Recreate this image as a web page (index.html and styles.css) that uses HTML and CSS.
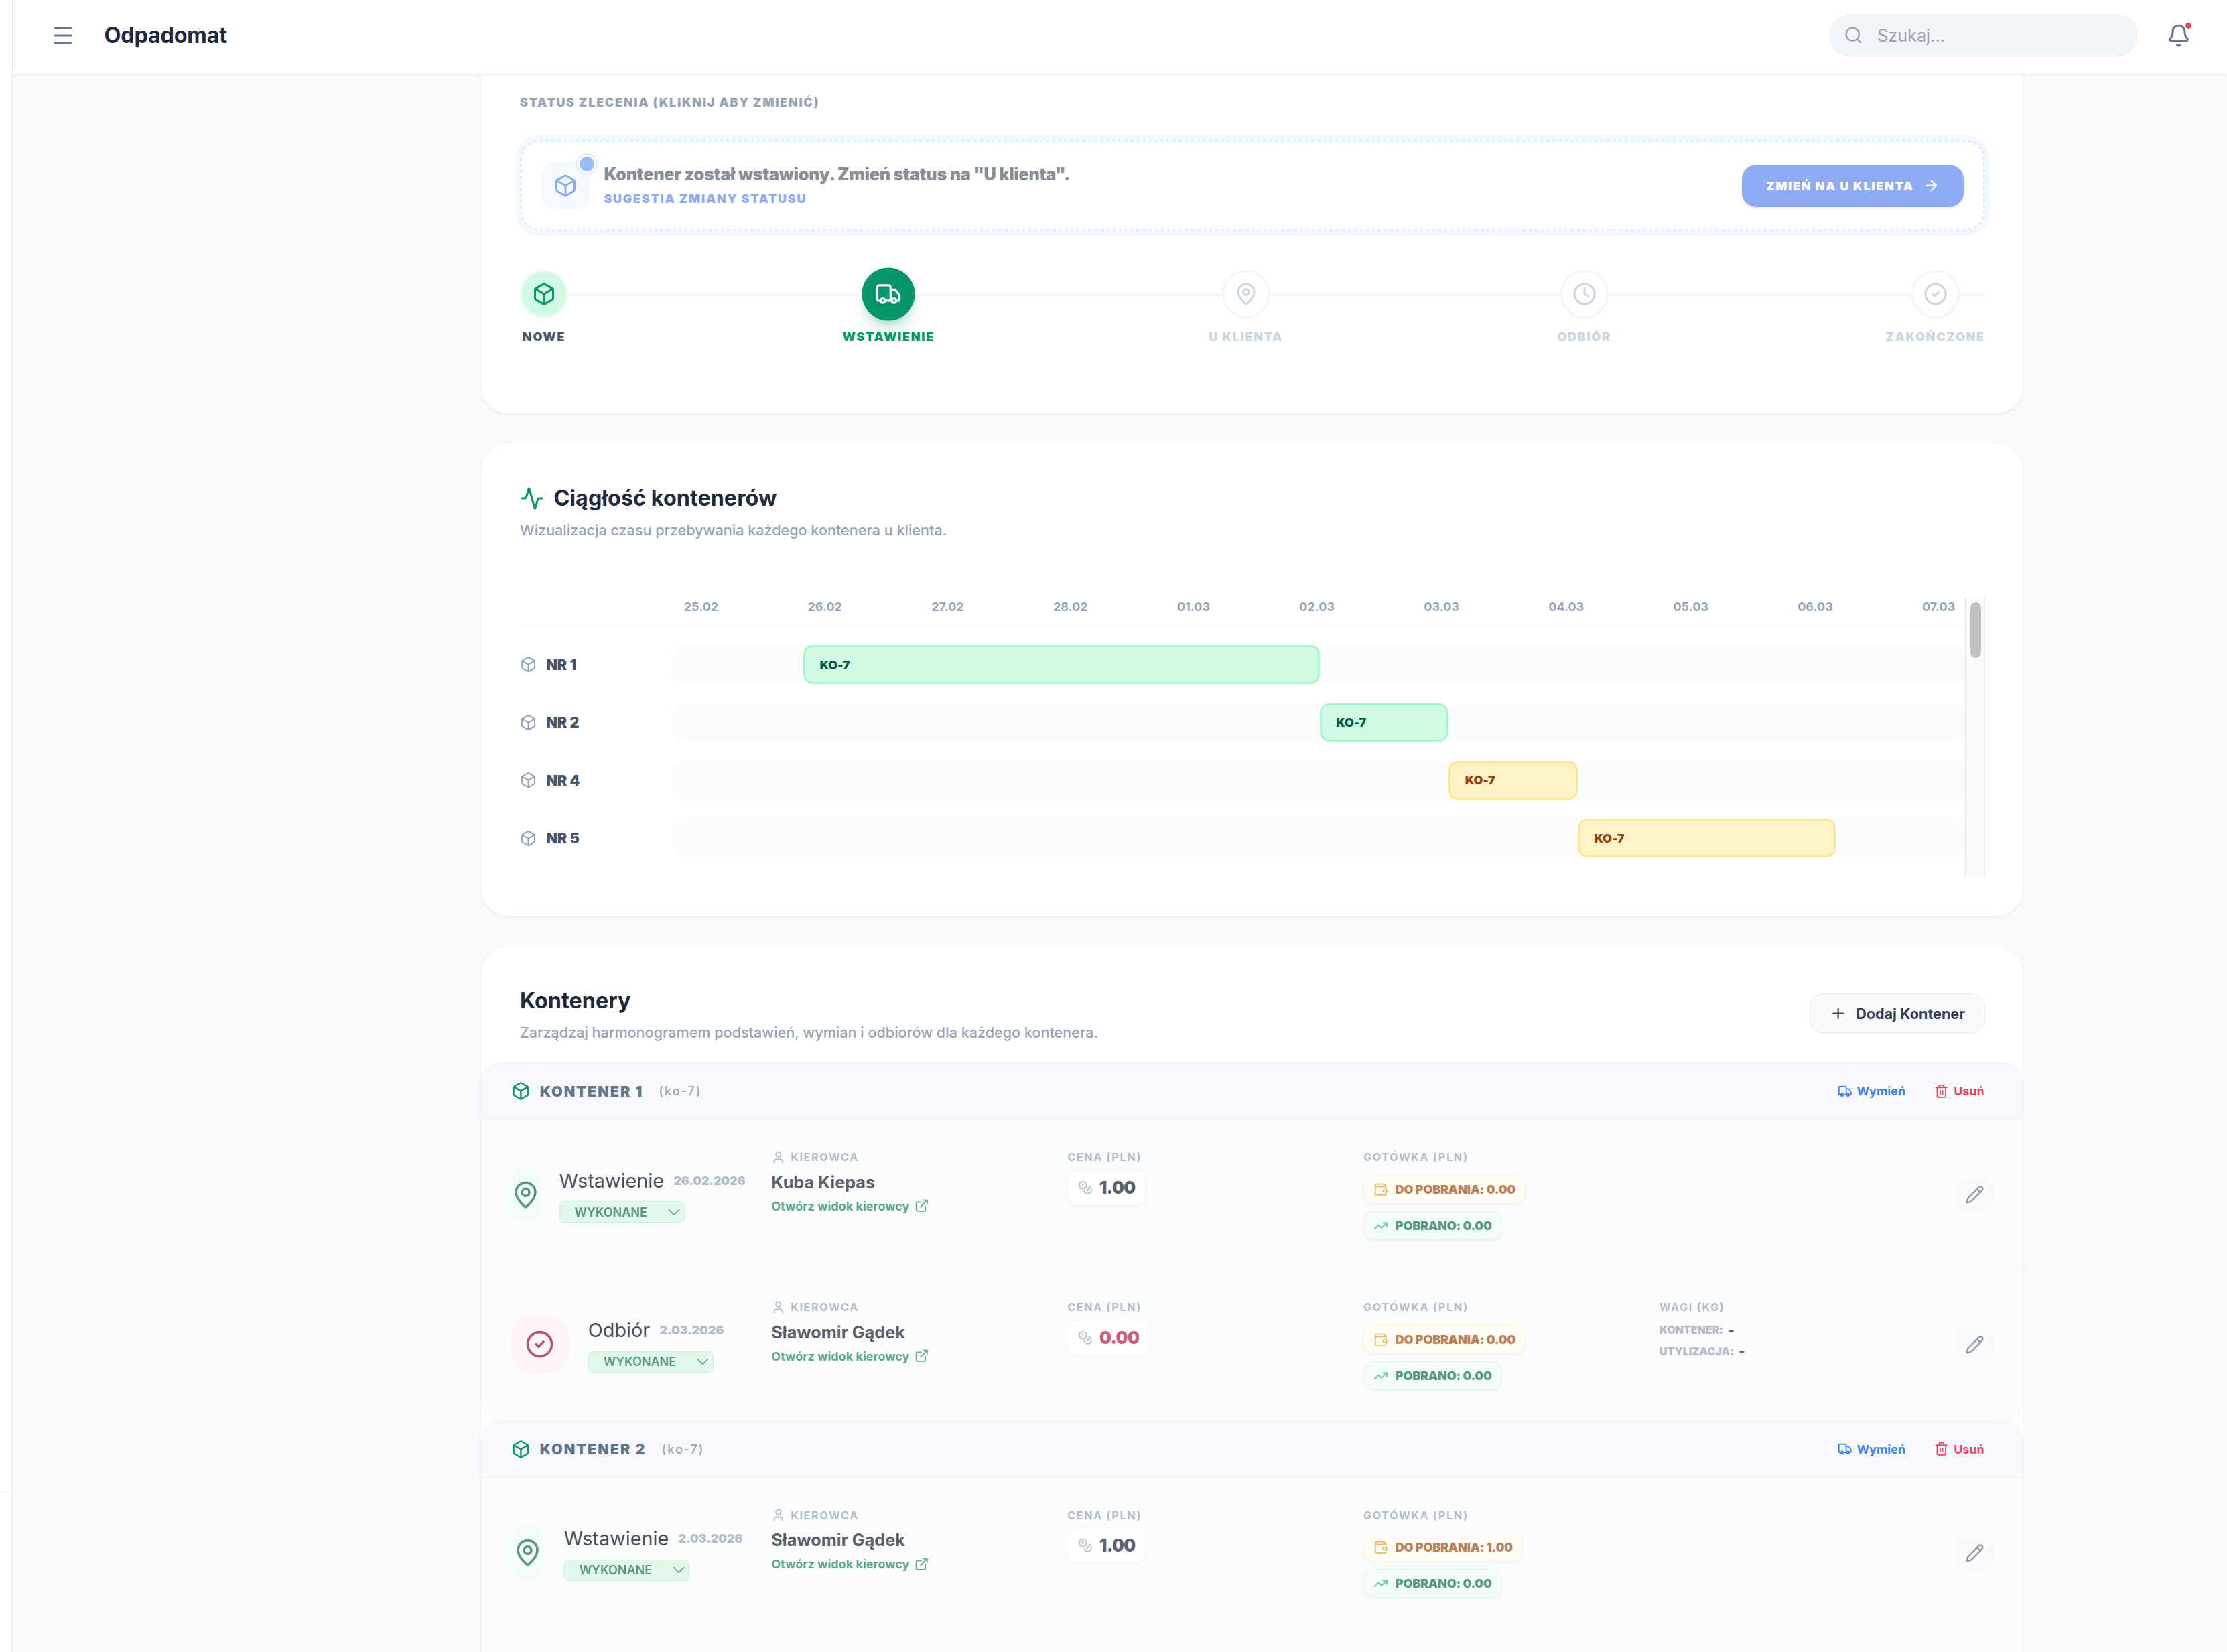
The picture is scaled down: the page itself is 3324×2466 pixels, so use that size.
FILE: index.html
```html
<!DOCTYPE html>
<html lang="pl">
<head>
  <meta charset="UTF-8" />
  <meta name="viewport" content="width=device-width, initial-scale=1.0"/>
  <title>Odpadomat</title>
  <link rel="stylesheet" href="styles.css">
</head>
<body>

  <!-- icons -->
  <svg class="sprite" xmlns="http://www.w3.org/2000/svg">
    <symbol id="menu" viewBox="0 0 24 24"><path d="M4 5h16M4 12h16M4 19h16"/></symbol>
    <symbol id="search" viewBox="0 0 24 24"><circle cx="11" cy="11" r="8"/><path d="m21 21-4.3-4.3"/></symbol>
    <symbol id="bell" viewBox="0 0 24 24"><path d="M10.268 21a2 2 0 0 0 3.464 0"/><path d="M3.262 15.326A1 1 0 0 0 4 17h16a1 1 0 0 0 .74-1.673C19.41 13.956 18 12.499 18 8A6 6 0 0 0 6 8c0 4.499-1.411 5.956-2.738 7.326"/></symbol>
    <symbol id="box" viewBox="0 0 24 24"><path d="M21 8a2 2 0 0 0-1-1.73l-7-4a2 2 0 0 0-2 0l-7 4A2 2 0 0 0 3 8v8a2 2 0 0 0 1 1.73l7 4a2 2 0 0 0 2 0l7-4A2 2 0 0 0 21 16Z"/><path d="m3.3 7 8.7 5 8.7-5"/><path d="M12 22V12"/></symbol>
    <symbol id="truck" viewBox="0 0 24 24"><path d="M14 18V6a2 2 0 0 0-2-2H4a2 2 0 0 0-2 2v11a1 1 0 0 0 1 1h2"/><path d="M15 18H9"/><path d="M19 18h2a1 1 0 0 0 1-1v-3.65a1 1 0 0 0-.22-.624l-3.48-4.35A1 1 0 0 0 17.52 8H14"/><circle cx="17" cy="18" r="2"/><circle cx="7" cy="18" r="2"/></symbol>
    <symbol id="pin" viewBox="0 0 24 24"><path d="M20 10c0 4.993-5.539 10.193-7.399 11.799a1 1 0 0 1-1.202 0C9.539 20.193 4 14.993 4 10a8 8 0 0 1 16 0"/><circle cx="12" cy="10" r="3"/></symbol>
    <symbol id="clock" viewBox="0 0 24 24"><circle cx="12" cy="12" r="10"/><path d="M12 6v6l4 2"/></symbol>
    <symbol id="check" viewBox="0 0 24 24"><circle cx="12" cy="12" r="10"/><path d="m9 12 2 2 4-4"/></symbol>
    <symbol id="arrow" viewBox="0 0 24 24"><path d="M5 12h14"/><path d="m12 5 7 7-7 7"/></symbol>
    <symbol id="activity" viewBox="0 0 24 24"><path d="M22 12h-2.48a2 2 0 0 0-1.93 1.46l-2.35 8.36a.25.25 0 0 1-.48 0L9.24 2.18a.25.25 0 0 0-.48 0l-2.35 8.36A2 2 0 0 1 4.49 12H2"/></symbol>
    <symbol id="plus" viewBox="0 0 24 24"><path d="M5 12h14M12 5v14"/></symbol>
    <symbol id="trash" viewBox="0 0 24 24"><path d="M3 6h18"/><path d="M19 6v14a2 2 0 0 1-2 2H7a2 2 0 0 1-2-2V6"/><path d="M8 6V4a2 2 0 0 1 2-2h4a2 2 0 0 1 2 2v2"/><path d="M10 11v6M14 11v6"/></symbol>
    <symbol id="user" viewBox="0 0 24 24"><path d="M19 21v-2a4 4 0 0 0-4-4H9a4 4 0 0 0-4 4v2"/><circle cx="12" cy="7" r="4"/></symbol>
    <symbol id="external" viewBox="0 0 24 24"><path d="M15 3h6v6"/><path d="M10 14 21 3"/><path d="M18 13v6a2 2 0 0 1-2 2H5a2 2 0 0 1-2-2V8a2 2 0 0 1 2-2h6"/></symbol>
    <symbol id="coins" viewBox="0 0 24 24"><circle cx="8" cy="8" r="6"/><path d="M18.09 10.37A6 6 0 1 1 10.34 18"/><path d="M7 6h1v4"/><path d="m16.71 13.88.7.71-2.82 2.82"/></symbol>
    <symbol id="wallet" viewBox="0 0 24 24"><path d="M19 7V4a1 1 0 0 0-1-1H5a2 2 0 0 0 0 4h15a1 1 0 0 1 1 1v4h-3a2 2 0 0 0 0 4h3a1 1 0 0 0 1-1v-2a1 1 0 0 0-1-1"/><path d="M3 5v14a2 2 0 0 0 2 2h15a1 1 0 0 0 1-1v-4"/></symbol>
    <symbol id="trend" viewBox="0 0 24 24"><path d="M16 7h6v6"/><path d="m22 7-8.5 8.5-5-5L2 17"/></symbol>
    <symbol id="pen" viewBox="0 0 24 24"><path d="M21.174 6.812a1 1 0 0 0-3.986-3.987L3.842 16.174a2 2 0 0 0-.5.83l-1.321 4.352a.5.5 0 0 0 .623.622l4.353-1.32a2 2 0 0 0 .83-.497z"/><path d="m15 5 4 4"/></symbol>
    <symbol id="chevron" viewBox="0 0 24 14"><path d="m2 2 10 10L22 2"/></symbol>
  </svg>

  <div class="sidebar"><div class="sidebar-footer"></div></div>

  <div class="page">
    <header class="topbar">
      <button class="icon-btn"><svg class="icon i20"><use href="#menu"/></svg></button>
      <h1 class="brand">Odpadomat</h1>
      <div class="search"><svg class="icon i16"><use href="#search"/></svg><span>Szukaj...</span></div>
      <button class="icon-btn bell"><svg class="icon i20"><use href="#bell"/></svg><span class="bell-dot"></span></button>
    </header>

    <main class="content">

      <section class="card status-card">
        <div class="status-title">Status zlecenia (kliknij aby zmienić)</div>

        <div class="suggestion">
          <div class="suggestion-icon"><svg class="icon i20"><use href="#box"/></svg><span class="ping"></span></div>
          <div class="suggestion-text">
            <div class="suggestion-main">Kontener został wstawiony. Zmień status na "U klienta".</div>
            <div class="suggestion-sub">Sugestia zmiany statusu</div>
          </div>
          <button class="change-btn"><span>Zmień na U klienta</span><svg class="icon i14"><use href="#arrow"/></svg></button>
        </div>

        <div class="stepper">
          <div class="step done"><div class="step-circle"><svg class="icon i20"><use href="#box"/></svg></div><span>Nowe</span></div>
          <div class="step active"><div class="step-circle"><svg class="icon i20"><use href="#truck"/></svg></div><span>Wstawienie</span></div>
          <div class="step"><div class="step-circle"><svg class="icon i20"><use href="#pin"/></svg></div><span>U klienta</span></div>
          <div class="step"><div class="step-circle"><svg class="icon i20"><use href="#clock"/></svg></div><span>Odbiór</span></div>
          <div class="step"><div class="step-circle"><svg class="icon i20"><use href="#check"/></svg></div><span>Zakończone</span></div>
        </div>
      </section>

      <section class="card timeline-card">
        <h2 class="card-title"><svg class="icon i20"><use href="#activity"/></svg>Ciągłość kontenerów</h2>
        <p class="card-sub">Wizualizacja czasu przebywania każdego kontenera u klienta.</p>

        <div class="gantt">
          <div class="gantt-body">
            <div class="gantt-head">
              <span>25.02</span><span>26.02</span><span>27.02</span><span>28.02</span><span>01.03</span><span>02.03</span><span>03.03</span><span>04.03</span><span>05.03</span><span>06.03</span><span>07.03</span>
            </div>
            <div class="gantt-row">
              <div class="gantt-label"><svg class="icon i14"><use href="#box"/></svg>NR 1</div>
              <div class="track"><div class="bar green" style="margin-left:10%;width:40%">KO-7</div></div>
            </div>
            <div class="gantt-row">
              <div class="gantt-label"><svg class="icon i14"><use href="#box"/></svg>NR 2</div>
              <div class="track"><div class="bar green" style="margin-left:50%;width:10%">KO-7</div></div>
            </div>
            <div class="gantt-row">
              <div class="gantt-label"><svg class="icon i14"><use href="#box"/></svg>NR 4</div>
              <div class="track"><div class="bar amber" style="margin-left:60%;width:10%">KO-7</div></div>
            </div>
            <div class="gantt-row">
              <div class="gantt-label"><svg class="icon i14"><use href="#box"/></svg>NR 5</div>
              <div class="track"><div class="bar amber" style="margin-left:70%;width:20%">KO-7</div></div>
            </div>
          </div>
          <div class="scrollbar"><div class="thumb"></div></div>
        </div>
      </section>

      <section class="card list-card">
        <div class="list-head">
          <div>
            <h2 class="card-title">Kontenery</h2>
            <p class="card-sub">Zarządzaj harmonogramem podstawień, wymian i odbiorów dla każdego kontenera.</p>
          </div>
          <button class="add-btn"><svg class="icon i14"><use href="#plus"/></svg>Dodaj Kontener</button>
        </div>

        <div class="group">
          <div class="group-head">
            <svg class="icon i16 group-icon"><use href="#box"/></svg>
            <span class="group-name">Kontener 1</span>
            <span class="group-type">(ko-7)</span>
            <button class="link-btn blue"><svg class="icon i12"><use href="#truck"/></svg>Wymień</button>
            <button class="link-btn red"><svg class="icon i12"><use href="#trash"/></svg>Usuń</button>
          </div>

          <div class="row first">
            <div class="stage">
              <div class="stage-icon"><svg class="icon i24"><use href="#pin"/></svg></div>
              <div class="stage-info">
                <div class="stage-name">Wstawienie<span class="date">26.02.2026</span></div>
                <div class="select">WYKONANE<svg class="icon"><use href="#chevron"/></svg></div>
              </div>
            </div>
            <div class="cell">
              <div class="label"><svg class="icon i12"><use href="#user"/></svg>Kierowca</div>
              <div class="driver">Kuba Kiepas</div>
              <a class="driver-link">Otwórz widok kierowcy<svg class="icon i12"><use href="#external"/></svg></a>
            </div>
            <div class="cell">
              <div class="label">Cena (PLN)</div>
              <div class="price"><svg class="icon i12"><use href="#coins"/></svg>1.00</div>
            </div>
            <div class="cell">
              <div class="label">Gotówka (PLN)</div>
              <div class="chip due"><svg class="icon i12"><use href="#wallet"/></svg>DO POBRANIA: 0.00</div>
              <div class="chip paid"><svg class="icon i12"><use href="#trend"/></svg>POBRANO: 0.00</div>
            </div>
            <div class="cell"></div>
            <button class="edit-btn"><svg class="icon i16"><use href="#pen"/></svg></button>
          </div>

          <div class="row last">
            <div class="stage">
              <div class="stage-icon rose"><svg class="icon i24"><use href="#check"/></svg></div>
              <div class="stage-info">
                <div class="stage-name">Odbiór<span class="date">2.03.2026</span></div>
                <div class="select">WYKONANE<svg class="icon"><use href="#chevron"/></svg></div>
              </div>
            </div>
            <div class="cell">
              <div class="label"><svg class="icon i12"><use href="#user"/></svg>Kierowca</div>
              <div class="driver">Sławomir Gądek</div>
              <a class="driver-link">Otwórz widok kierowcy<svg class="icon i12"><use href="#external"/></svg></a>
            </div>
            <div class="cell">
              <div class="label">Cena (PLN)</div>
              <div class="price zero"><svg class="icon i12"><use href="#coins"/></svg>0.00</div>
            </div>
            <div class="cell">
              <div class="label">Gotówka (PLN)</div>
              <div class="chip due"><svg class="icon i12"><use href="#wallet"/></svg>DO POBRANIA: 0.00</div>
              <div class="chip paid"><svg class="icon i12"><use href="#trend"/></svg>POBRANO: 0.00</div>
            </div>
            <div class="cell">
              <div class="label">Wagi (kg)</div>
              <div class="weight"><span>Kontener:</span><b>-</b></div>
              <div class="weight"><span>Utylizacja:</span><b>-</b></div>
            </div>
            <button class="edit-btn"><svg class="icon i16"><use href="#pen"/></svg></button>
          </div>
        </div>

        <div class="group">
          <div class="group-head">
            <svg class="icon i16 group-icon"><use href="#box"/></svg>
            <span class="group-name">Kontener 2</span>
            <span class="group-type">(ko-7)</span>
            <button class="link-btn blue"><svg class="icon i12"><use href="#truck"/></svg>Wymień</button>
            <button class="link-btn red"><svg class="icon i12"><use href="#trash"/></svg>Usuń</button>
          </div>

          <div class="row">
            <div class="stage">
              <div class="stage-icon"><svg class="icon i24"><use href="#pin"/></svg></div>
              <div class="stage-info">
                <div class="stage-name">Wstawienie<span class="date">2.03.2026</span></div>
                <div class="select">WYKONANE<svg class="icon"><use href="#chevron"/></svg></div>
              </div>
            </div>
            <div class="cell">
              <div class="label"><svg class="icon i12"><use href="#user"/></svg>Kierowca</div>
              <div class="driver">Sławomir Gądek</div>
              <a class="driver-link">Otwórz widok kierowcy<svg class="icon i12"><use href="#external"/></svg></a>
            </div>
            <div class="cell">
              <div class="label">Cena (PLN)</div>
              <div class="price"><svg class="icon i12"><use href="#coins"/></svg>1.00</div>
            </div>
            <div class="cell">
              <div class="label">Gotówka (PLN)</div>
              <div class="chip due"><svg class="icon i12"><use href="#wallet"/></svg>DO POBRANIA: 1.00</div>
              <div class="chip paid"><svg class="icon i12"><use href="#trend"/></svg>POBRANO: 0.00</div>
            </div>
            <div class="cell"></div>
            <button class="edit-btn"><svg class="icon i16"><use href="#pen"/></svg></button>
          </div>

          <div class="row next"></div>
        </div>
      </section>

    </main>
  </div>

  <div class="bottom-shade"></div>

</body>
</html>
```

FILE: styles.css
```css
* {
  box-sizing: border-box;
  margin: 0;
  padding: 0;
}
html {
  font-size: 28.8px;
}
body {
  display: flex;
  height: 100vh;
  overflow: hidden;
  position: relative;
  background-color: #f8fafc;
  color: #1e293b;
  font-family: Inter, "Liberation Sans", sans-serif;
}
button {
  border: none;
  background: none;
  font-family: inherit;
  color: inherit;
  display: flex;
  align-items: center;
}
.sprite {
  position: absolute;
  width: 0;
  height: 0;
}
.icon {
  fill: none;
  stroke: currentColor;
  stroke-width: 2;
  stroke-linecap: round;
  stroke-linejoin: round;
  flex-shrink: 0;
  display: block;
}
.i12 { width: 0.75rem; height: 0.75rem; }
.i14 { width: 0.875rem; height: 0.875rem; }
.i16 { width: 1rem; height: 1rem; }
.i20 { width: 1.25rem; height: 1.25rem; }
.i24 { width: 1.5rem; height: 1.5rem; }

/* shell */
.sidebar {
  width: 19px;
  flex-shrink: 0;
  background-color: #fff;
  border-right: 1px solid #e2e8f0;
  display: flex;
  flex-direction: column;
  justify-content: flex-end;
}
.sidebar-footer {
  height: 240px;
  border-top: 1px solid #f1f5f9;
}
.page {
  flex: 1;
  height: 100vh;
  overflow: hidden;
  display: flex;
  flex-direction: column;
}
.topbar {
  height: 111px;
  flex-shrink: 0;
  padding: 0 39.5px 5px 43px;
  display: flex;
  align-items: center;
  background-color: #fff;
  border-bottom: 1px solid #e2e8f0;
  box-shadow: 0 2px 4px rgba(0, 0, 0, 0.05);
  position: relative;
  z-index: 2;
}
.icon-btn {
  padding: 0.5rem;
  color: #64748b;
  position: relative;
}
.brand {
  margin-left: 1rem;
  font-size: 1.125rem;
  font-weight: 700;
  letter-spacing: -0.007em;
}
.search {
  margin-left: auto;
  margin-right: 1rem;
  width: 16rem;
  height: 64px;
  padding: 0 0.75rem;
  display: flex;
  align-items: center;
  gap: 0.75rem;
  border-radius: 32px;
  background-color: #f1f5f9;
  color: #94a3b8;
}
.search span {
  font-size: 0.875rem;
  color: #9ca3af;
}
.bell-dot {
  position: absolute;
  top: 14px;
  right: 14px;
  width: 9px;
  height: 9px;
  border-radius: 50%;
  background-color: #f43f5e;
}
.content {
  flex: 1;
  min-height: 0;
  overflow: hidden;
  padding-left: 698.4px;
  display: flex;
  flex-direction: column;
  gap: 1.5rem;
}
.card {
  width: 80rem;
  background-color: #fff;
  border: 1px solid #f1f5f9;
  border-radius: 1.5rem;
  box-shadow: 0 2px 4px rgba(0, 0, 0, 0.05);
  flex-shrink: 0;
}
.card-title {
  display: flex;
  align-items: center;
  gap: 0.5rem;
  font-size: 1.125rem;
  line-height: 1.75rem;
  font-weight: 700;
}
.card-title .icon {
  color: #059669;
}
.card-sub {
  margin-top: 0.25rem;
  font-size: 0.75rem;
  line-height: 1rem;
  font-weight: 500;
  color: #94a3b8;
}

/* order status */
.status-card {
  height: 506.5px;
  padding: 28px 2rem 0;
  border-top: none;
  border-radius: 0 0 1.5rem 1.5rem;
}
.status-title {
  font-size: 0.625rem;
  line-height: 27px;
  font-weight: 900;
  letter-spacing: 0.094em;
  text-transform: uppercase;
  color: #94a3b8;
}
.suggestion {
  margin-top: 43px;
  height: 136px;
  padding: 0 1rem;
  display: flex;
  align-items: center;
  border: 3px dashed #dfecfe;
  border-radius: 1rem;
  box-shadow: 0 0 0 7px #f3f7fe;
}
.suggestion-icon {
  width: 2.5rem;
  height: 2.5rem;
  display: flex;
  align-items: center;
  justify-content: center;
  position: relative;
  border-radius: 0.75rem;
  background-color: #f5f9ff;
  color: #8cabf6;
}
.ping {
  position: absolute;
  top: -10px;
  right: -10px;
  width: 28px;
  height: 28px;
  border-radius: 50%;
  background-color: #99bdfb;
  border: 3px solid #fff;
  box-shadow: 0 0 0 2px #dbe8fe;
}
.suggestion-text {
  margin-left: 0.75rem;
  display: flex;
  flex-direction: column;
}
.suggestion-main {
  margin-top: -2px;
  font-size: 0.875rem;
  line-height: 1.25rem;
  font-weight: 900;
  letter-spacing: -0.012em;
  color: #888f99;
}
.suggestion-sub {
  font-size: 0.625rem;
  line-height: 27px;
  margin-top: 5px;
  font-weight: 900;
  letter-spacing: 0.095em;
  text-transform: uppercase;
  color: #8ca9f5;
}
.change-btn {
  margin-left: auto;
  height: 63px;
  padding: 0 1.25rem;
  gap: 13px;
  border-radius: 0.75rem;
  background-color: #8eabf4;
  box-shadow: 0 2px 4px #dbe8fe;
  color: #fff;
  font-size: 0.625rem;
  font-weight: 900;
  letter-spacing: 0.093em;
  text-transform: uppercase;
}
.stepper {
  margin-top: 58px;
  display: flex;
  justify-content: space-between;
  background: linear-gradient(#f1f5f9, #f1f5f9) 0 36px / 100% 3px no-repeat;
}
.step {
  display: flex;
  flex-direction: column;
  align-items: center;
  gap: 0.5rem;
  color: #cbd5e1;
}
.step-circle {
  width: 2.5rem;
  height: 2.5rem;
  display: flex;
  align-items: center;
  justify-content: center;
  border: 3px solid #f1f5f9;
  border-radius: 50%;
  background-color: #fff;
}
.step span {
  font-size: 0.625rem;
  line-height: 27px;
  font-weight: 900;
  letter-spacing: 0.094em;
  text-transform: uppercase;
}
.step.done {
  color: #475569;
}
.step.done .step-circle {
  background-color: #d1fae5;
  border-color: #e7fbf1;
  color: #059669;
}
.step.active {
  color: #059669;
}
.step.active .step-circle {
  background-color: #059669;
  border-color: #059669;
  color: #fff;
  transform: scale(1.1);
  box-shadow: 0 16px 24px -5px rgba(5, 150, 105, 0.22), 0 7px 10px -6px rgba(5, 150, 105, 0.3);
}

/* timeline */
.timeline-card {
  height: 707px;
  padding: 2rem;
}
.gantt {
  margin-top: 3rem;
  height: 416px;
  display: flex;
}
.gantt-body {
  flex: 1;
}
.gantt-head {
  display: flex;
  justify-content: space-between;
  height: 42.4px;
  padding-left: 8.5rem;
  padding-right: 0.5rem;
  margin-bottom: 1rem;
  border-bottom: 1px solid #f1f5f9;
  font-size: 0.625rem;
  line-height: 27px;
  font-weight: 700;
  color: #94a3b8;
}
.gantt-row {
  display: flex;
  align-items: center;
  height: 2rem;
  margin-bottom: 1rem;
}
.gantt-label {
  width: 8rem;
  display: flex;
  align-items: center;
  gap: 0.5rem;
  font-size: 0.75rem;
  font-weight: 900;
  letter-spacing: -0.025em;
  word-spacing: 0.06em;
  color: #475569;
}
.gantt-label .icon {
  color: #94a3b8;
}
.track {
  flex: 1;
  height: 2rem;
  border-radius: 0.5rem;
  background-color: #fafcfe;
}
.bar {
  height: 2rem;
  padding: 0 0.75rem;
  display: flex;
  align-items: center;
  border: 3px solid;
  border-radius: 0.5rem;
  font-size: 0.625rem;
  font-weight: 900;
  letter-spacing: -0.01em;
}
.bar.green {
  background-color: #d1fae5;
  border-color: #a7f3d0;
  color: #065f46;
}
.bar.amber {
  background-color: #fef3c7;
  border-color: #fde68a;
  color: #92400e;
}
.scrollbar {
  width: 30px;
  padding: 7px 6px 0;
  background-color: #fafafa;
  border-left: 2px solid #e8e8e8;
  border-right: 2px solid #ededed;
}
.thumb {
  width: 16px;
  height: 83px;
  border-radius: 8px;
  background-color: #c1c1c1;
}

/* containers */
.list-head {
  padding: 2rem 2rem 1rem;
  display: flex;
  align-items: center;
  justify-content: space-between;
  border-bottom: 1px solid #f8fafc;
}
.add-btn {
  height: 60px;
  padding: 0 1rem;
  gap: 0.5rem;
  border: 1px solid #e2e8f0;
  border-radius: 0.75rem;
  background-color: #f8fafc;
  font-size: 0.75rem;
  font-weight: 700;
  color: #334155;
}
.group {
  border: 1px solid #f1f5f9;
  border-radius: 1rem;
  overflow: hidden;
}
.group-head {
  height: 85.4px;
  padding: 0 2rem 0 1.5rem;
  display: flex;
  align-items: center;
  background-color: #f7f8fc;
  border-bottom: 1px solid #f1f5f9;
}
.group-icon {
  color: #059669;
}
.group-name {
  margin-left: 0.5rem;
  font-size: 0.75rem;
  font-weight: 900;
  letter-spacing: 0.09em;
  text-transform: uppercase;
  color: #64748b;
}
.group-type {
  margin-left: 0.8rem;
  margin-right: auto;
  font-size: 0.625rem;
  font-weight: 500;
  letter-spacing: 0.11em;
  color: #94a3b8;
}
.link-btn {
  gap: 0.25rem;
  margin-left: 1.5rem;
  font-size: 0.625rem;
  font-weight: 700;
}
.link-btn.blue {
  color: #3b82f6;
}
.link-btn.red {
  color: #f43f5e;
}
.row {
  height: 224px;
  padding: 1.5rem;
  display: grid;
  grid-template-columns: 12rem repeat(4, 1fr) auto;
  column-gap: 1.5rem;
  align-items: center;
  background-color: #fbfcfe;
  border-bottom: 1px solid #f8f9fc;
}
.row.first {
  background-color: #fafbfd;
}
.row.last {
  height: 223px;
}
.stage {
  display: flex;
  align-items: center;
  gap: 1rem;
}
.stage-icon {
  width: 3rem;
  height: 3rem;
  display: flex;
  align-items: center;
  justify-content: center;
  border-radius: 1rem;
  background-color: #f4fcf9;
  color: #57967f;
}
.stage-icon.rose {
  background-color: #fef3f7;
  color: #b5566f;
}
.stage-info {
  flex-shrink: 0;
  padding-bottom: 1px;
}
.stage-name {
  display: flex;
  align-items: center;
  gap: 0.5rem;
  line-height: 1.5rem;
  color: #4b4f5c;
}
.date {
  font-size: 0.625rem;
  font-weight: 900;
  letter-spacing: -0.01em;
  color: #b3bbc9;
}
.select {
  margin-top: 9px;
  width: 187px;
  height: 32px;
  padding: 0 6px 0 22px;
  display: flex;
  align-items: center;
  justify-content: space-between;
  border: 1px solid #c5efdc;
  border-radius: 0.25rem;
  background-color: #e2f8ec;
  font-size: 0.625rem;
  font-weight: 600;
  color: #57967f;
}
.select .icon {
  width: 18px;
  height: 11px;
}
.cell {
  align-self: start;
  display: flex;
  flex-direction: column;
  align-items: flex-start;
}
.label {
  display: flex;
  align-items: center;
  gap: 0.25rem;
  font-size: 0.5625rem;
  line-height: 24.3px;
  font-weight: 700;
  letter-spacing: 0.1em;
  text-transform: uppercase;
  color: #b3bbc9;
}
.driver {
  margin-top: 0.25rem;
  font-size: 0.875rem;
  line-height: 36px;
  font-weight: 700;
  color: #5a616d;
}
.driver-link {
  margin-top: 4px;
  display: flex;
  align-items: center;
  gap: 0.25rem;
  font-size: 0.625rem;
  line-height: 27px;
  font-weight: 700;
  color: #5aa88c;
}
.price {
  margin-top: 0.25rem;
  height: 52px;
  padding: 0 0.5rem;
  display: flex;
  align-items: center;
  gap: 0.375rem;
  border: 1px solid #f4f6f9;
  border-radius: 0.5rem;
  background-color: #fff;
  box-shadow: 0 2px 4px rgba(0, 0, 0, 0.035);
  font-size: 0.875rem;
  font-weight: 900;
  letter-spacing: -0.02em;
  color: #5a616d;
}
.price .icon {
  color: #b3bbc9;
}
.price.zero {
  color: #c7617b;
}
.chip {
  height: 43px;
  margin-top: 11px;
  padding: 0 0.5rem;
  display: flex;
  align-items: center;
  gap: 0.375rem;
  border: 1px solid;
  border-radius: 0.5rem;
  box-shadow: 0 2px 4px rgba(0, 0, 0, 0.035);
  font-size: 0.625rem;
  font-weight: 900;
  letter-spacing: -0.01em;
}
.chip.due {
  margin-top: 0.5rem;
  background-color: #fffcf5;
  border-color: #fef4d8;
  color: #b78155;
}
.chip.due .icon {
  color: #e9b75f;
}
.chip.paid {
  background-color: #f4fcf9;
  border-color: #e0f7ed;
  color: #57967f;
}
.chip.paid .icon {
  color: #5fc3a0;
}
.weight {
  margin-top: 0.125rem;
  display: flex;
  gap: 0.25rem;
  font-size: 0.5625rem;
  line-height: 1rem;
  font-weight: 900;
  letter-spacing: -0.01em;
  text-transform: uppercase;
  color: #b3bbc9;
}
.label + .weight {
  margin-top: 0.25rem;
}
.weight b {
  font-size: 0.6875rem;
  font-weight: 900;
  color: #5a616d;
}
.edit-btn {
  padding: 0.5rem;
  border-radius: 0.5rem;
  background-color: #fafafc;
  color: #949cab;
}
/* soft shade coming up from below the fold */
.bottom-shade {
  position: absolute;
  left: 1505px;
  bottom: 0;
  width: 1225px;
  height: 24px;
  border-radius: 70px 70px 0 0;
  background-color: rgba(0, 0, 0, 0.005);
}
```
